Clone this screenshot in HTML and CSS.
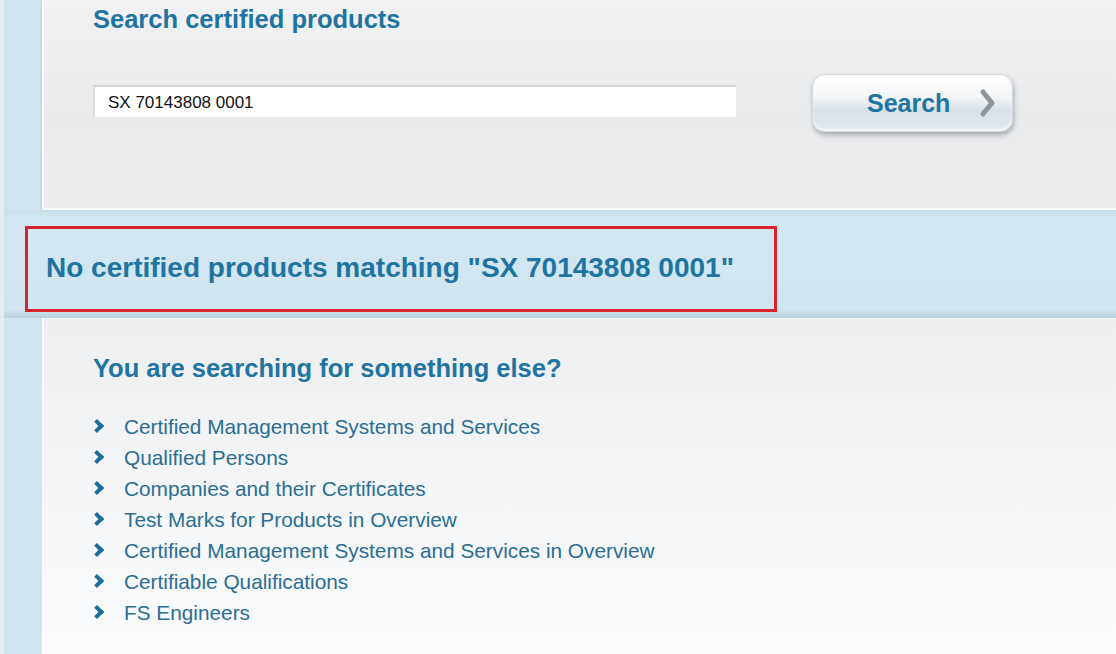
FILE: index.html
```html
<!DOCTYPE html>
<html lang="en">
  <head>
    <meta charset="UTF-8" />
    <meta name="viewport" content="width=device-width, initial-scale=1.0" />
    <title>Search certified products</title>
    <link rel="stylesheet" href="styles.css">
  </head>
  <body>
    <div class="page">
      <div class="panel search-panel">
        <h2 class="title">Search certified products</h2>
        <form class="search-row">
          <input class="search-input" type="text" value="SX 70143808 0001" />
          <button class="search-btn" type="button">
            <span>Search</span>
            <svg class="btn-chevron" width="20" height="30" viewBox="0 0 20 30">
              <path d="M5 4 L14 15 L5 26" fill="none" stroke="#8f9499" stroke-width="5" stroke-linecap="round" stroke-linejoin="round" />
            </svg>
          </button>
        </form>
      </div>
      <div class="band">
        <div class="result-box">
          <h2 class="result">No certified products matching "SX 70143808 0001"</h2>
        </div>
      </div>
      <div class="panel other-panel">
        <h2 class="title">You are searching for something else?</h2>
        <ul class="links">
          <li><a href="#">Certified Management Systems and Services</a></li>
          <li><a href="#">Qualified Persons</a></li>
          <li><a href="#">Companies and their Certificates</a></li>
          <li><a href="#">Test Marks for Products in Overview</a></li>
          <li><a href="#">Certified Management Systems and Services in Overview</a></li>
          <li><a href="#">Certifiable Qualifications</a></li>
          <li><a href="#">FS Engineers</a></li>
        </ul>
      </div>
    </div>
  </body>
</html>
```

FILE: styles.css
```css
html, body {
  margin: 0;
  height: 100%;
  overflow: hidden;
}
body {
  font-family: "Liberation Sans", Arial, sans-serif;
  background: #cfe4ef;
  border-left: 4px solid #e6edf1;
  box-sizing: border-box;
}
.page {
  display: flex;
  flex-direction: column;
  height: 100%;
}
.panel {
  margin-left: 38px;
  border-left: 2px solid #fbfcfd;
  padding-left: 49px;
}
.search-panel {
  height: 208px;
  border-bottom: 2px solid #fbfcfd;
  background: linear-gradient(to bottom, #f1f2f3 0%, #eaebed 55%, #ecedef 100%);
  box-shadow: 0 2px 3px rgba(120, 150, 165, 0.35);
}
.title {
  margin: 0;
  font-size: 25.5px;
  font-weight: bold;
  color: #1f74a1;
}
.search-panel .title {
  padding-top: 5px;
}
.search-row {
  display: flex;
  align-items: center;
  margin-top: 36px;
}
.search-input {
  width: 643px;
  height: 32px;
  box-sizing: border-box;
  border: none;
  border-top: 2px solid #d4d5d7;
  border-left: 2px solid #dcdddf;
  background: #fff;
  padding: 2px 0 0 13px;
  font-family: "Liberation Sans", Arial, sans-serif;
  font-size: 17px;
  color: #111;
  outline: none;
}
.search-btn {
  margin-left: 76px;
  margin-top: 4px;
  width: 201px;
  height: 58px;
  border: 1px solid #d3d8dc;
  border-radius: 13px;
  background: linear-gradient(to bottom, #ffffff 0%, #f3f5f7 40%, #d8e0e7 62%, #e4eaef 100%);
  box-shadow: 1px 3px 5px rgba(80, 90, 100, 0.45), inset 0 -2px 2px #f6f8fa;
  display: flex;
  align-items: center;
  padding: 0 14px 0 54px;
  font-family: "Liberation Sans", Arial, sans-serif;
  font-size: 25px;
  font-weight: bold;
  color: #1f74a1;
}
.btn-chevron {
  margin-left: auto;
}
.band {
  height: 108px;
  display: flex;
  align-items: flex-start;
  background: linear-gradient(to bottom, #c8dfeb 0%, #d3e7f1 8%, #cfe5ef 92%, #b9cfd9 100%);
}
.result-box {
  box-sizing: border-box;
  margin: 16px 0 0 21px;
  width: 752px;
  height: 86px;
  border: 3px solid #d8222e;
  display: flex;
  align-items: center;
  padding: 0 0 2px 18px;
}
.result {
  margin: 0;
  font-size: 28px;
  font-weight: bold;
  color: #1f74a1;
  white-space: nowrap;
}
.other-panel {
  flex: 1;
  background: linear-gradient(to bottom, #eeeff0 0%, #f3f4f5 40%, #f9fbfc 100%);
}
.other-panel .title {
  padding-top: 36px;
}
.links {
  list-style: none;
  margin: 28px 0 0;
  padding: 0;
}
.links li {
  position: relative;
  padding-left: 31px;
  line-height: 31px;
  font-size: 20.8px;
}
.links li::before {
  content: "";
  position: absolute;
  left: -1px;
  top: 10px;
  width: 6px;
  height: 6px;
  border-top: 4px solid #1a6f9c;
  border-right: 4px solid #1a6f9c;
  transform: rotate(45deg);
}
.links a {
  color: #2a6e94;
  text-decoration: none;
}
```
